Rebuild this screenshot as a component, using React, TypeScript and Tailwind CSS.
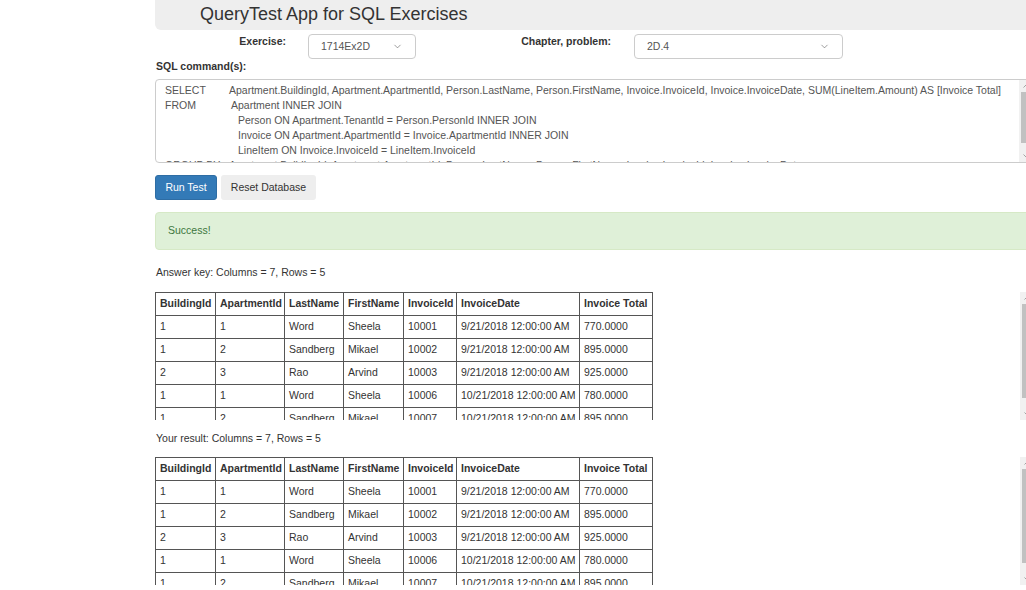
import React from "react";
import { ChevronDown } from "lucide-react";

type Row = {
  buildingId: number;
  apartmentId: number;
  lastName: string;
  firstName: string;
  invoiceId: number;
  invoiceDate: string;
  total: string;
};

const rows: Row[] = [
  { buildingId: 1, apartmentId: 1, lastName: "Word", firstName: "Sheela", invoiceId: 10001, invoiceDate: "9/21/2018 12:00:00 AM", total: "770.0000" },
  { buildingId: 1, apartmentId: 2, lastName: "Sandberg", firstName: "Mikael", invoiceId: 10002, invoiceDate: "9/21/2018 12:00:00 AM", total: "895.0000" },
  { buildingId: 2, apartmentId: 3, lastName: "Rao", firstName: "Arvind", invoiceId: 10003, invoiceDate: "9/21/2018 12:00:00 AM", total: "925.0000" },
  { buildingId: 1, apartmentId: 1, lastName: "Word", firstName: "Sheela", invoiceId: 10006, invoiceDate: "10/21/2018 12:00:00 AM", total: "780.0000" },
  { buildingId: 1, apartmentId: 2, lastName: "Sandberg", firstName: "Mikael", invoiceId: 10007, invoiceDate: "10/21/2018 12:00:00 AM", total: "895.0000" },
];

const columns = [
  { label: "BuildingId", width: "w-[60px]" },
  { label: "ApartmentId", width: "w-[69px]" },
  { label: "LastName", width: "w-[59px]" },
  { label: "FirstName", width: "w-[60px]" },
  { label: "InvoiceId", width: "w-[53px]" },
  { label: "InvoiceDate", width: "w-[123px]" },
  { label: "Invoice Total", width: "w-[73px]" },
];

function Select({ value, width }: { value: string; width: string }): JSX.Element {
  return (
    <div
      className={`${width} h-[25px] flex items-center justify-between pl-[12px] pr-[12px] bg-white border border-[#cccccc] rounded-[4px] text-[10.5px] text-[#555555]`}
    >
      <span>{value}</span>
      <ChevronDown size={11} strokeWidth={1.25} className="text-[#555555]" />
    </div>
  );
}

// classic scrollbar drawn by hand (headless browser hides the native one)
function Scrollbar({ thumb }: { thumb: string }): JSX.Element {
  return (
    <div className="w-[15px] shrink-0 h-full flex flex-col bg-[#f1f1f1]">
      <div className="h-[12px] flex items-center justify-center">
        <svg width="7" height="4" viewBox="0 0 7 4">
          <path d="M0.5 3.5 L3.5 0.5 L6.5 3.5" fill="none" stroke="#a3a3a3" strokeWidth="1" />
        </svg>
      </div>
      <div className="flex-1 flex flex-col px-[2px]">
        <div className={`${thumb} bg-[#c1c1c1]`} />
      </div>
      <div className="h-[12px] flex items-center justify-center">
        <svg width="7" height="4" viewBox="0 0 7 4">
          <path d="M0.5 0.5 L3.5 3.5 L6.5 0.5" fill="none" stroke="#a3a3a3" strokeWidth="1" />
        </svg>
      </div>
    </div>
  );
}

function ResultTable(): JSX.Element {
  return (
    <div className="h-[128px] flex">
      <div className="flex-1 overflow-hidden">
        <table className="table-fixed w-[497px] border-collapse text-[10.5px] text-[#333333]">
          <thead>
            <tr>
              {columns.map((col) => (
                <th
                  key={col.label}
                  className={`${col.width} border border-[#555555] px-[4px] h-[23px] text-left font-bold whitespace-nowrap`}
                >
                  {col.label}
                </th>
              ))}
            </tr>
          </thead>
          <tbody>
            {rows.map((row, i) => (
              <tr key={i}>
                <td className="border border-[#555555] px-[4px] h-[23px]">{row.buildingId}</td>
                <td className="border border-[#555555] px-[4px]">{row.apartmentId}</td>
                <td className="border border-[#555555] px-[4px]">{row.lastName}</td>
                <td className="border border-[#555555] px-[4px]">{row.firstName}</td>
                <td className="border border-[#555555] px-[4px]">{row.invoiceId}</td>
                <td className="border border-[#555555] px-[4px] whitespace-nowrap">{row.invoiceDate}</td>
                <td className="border border-[#555555] px-[4px]">{row.total}</td>
              </tr>
            ))}
          </tbody>
        </table>
      </div>
      <Scrollbar thumb="h-[94px]" />
    </div>
  );
}

export default function App(): JSX.Element {
  return (
    <div className="w-[1026px] h-[590px] overflow-hidden bg-white font-['Liberation_Sans',Arial,sans-serif] text-[#333333]">
      <div className="ml-[155px] w-[880px]">
        {/* title bar */}
        <div className="h-[30px] bg-[#eeeeee] rounded-bl-[6px] pl-[45px] pt-[3px] text-[18px] leading-[22px]">
          QueryTest App for SQL Exercises
        </div>

        {/* exercise pickers */}
        <div className="flex mt-[4px] text-[10.5px] leading-[15px]">
          <div className="w-[153px] pr-[22px] text-right font-bold">Exercise:</div>
          <Select value="1714Ex2D" width="w-[108px]" />
          <div className="w-[218px] pr-[23px] text-right font-bold">Chapter, problem:</div>
          <Select value="2D.4" width="w-[209px]" />
        </div>

        <div className="pl-[1px] text-[10.5px] leading-[15px] font-bold">SQL command(s):</div>

        {/* sql editor */}
        <div className="mt-[5px] h-[84px] flex border border-[#cccccc] rounded-[4px] overflow-hidden">
          <div className="flex-1 overflow-hidden pl-[9px] pt-[3px] text-[10.5px] leading-[15px] text-[#555555] whitespace-pre">
            <div className="flex">
              <span className="w-[64px] shrink-0">SELECT</span>
              <span>Apartment.BuildingId, Apartment.ApartmentId, Person.LastName, Person.FirstName, Invoice.InvoiceId, Invoice.InvoiceDate, SUM(LineItem.Amount) AS [Invoice Total]</span>
            </div>
            <div className="flex">
              <span className="w-[66px] shrink-0">FROM</span>
              <span>Apartment INNER JOIN</span>
            </div>
            <div className="pl-[73px]">Person ON Apartment.TenantId = Person.PersonId INNER JOIN</div>
            <div className="pl-[73px]">Invoice ON Apartment.ApartmentId = Invoice.ApartmentId INNER JOIN</div>
            <div className="pl-[73px]">LineItem ON Invoice.InvoiceId = LineItem.InvoiceId</div>
            <div className="flex">
              <span className="w-[64px] shrink-0">GROUP BY</span>
              <span>Apartment.BuildingId, Apartment.ApartmentId, Person.LastName, Person.FirstName, Invoice.InvoiceId, Invoice.InvoiceDate</span>
            </div>
          </div>
          <Scrollbar thumb="h-[51px]" />
        </div>

        {/* buttons */}
        <div className="flex gap-[4px] mt-[12px] text-[10.5px]">
          <button className="h-[25px] w-[62px] bg-[#337ab7] border border-[#2e6da4] rounded-[3px] text-white">
            Run Test
          </button>
          <button className="h-[25px] w-[95px] bg-[#eeeeee] rounded-[3px] text-[#333333]">
            Reset Database
          </button>
        </div>

        {/* status */}
        <div className="mt-[12px] h-[38px] flex items-center pl-[12px] bg-[#dff0d8] border border-[#d6e9c6] rounded-[4px] text-[10.5px] text-[#3c763d]">
          Success!
        </div>

        <div className="mt-[15px] pl-[1px] text-[10.5px] leading-[15px]">Answer key: Columns = 7, Rows = 5</div>
        <div className="mt-[12px]">
          <ResultTable />
        </div>

        <div className="mt-[11px] pl-[1px] text-[10.5px] leading-[15px]">Your result: Columns = 7, Rows = 5</div>
        <div className="mt-[11px]">
          <ResultTable />
        </div>
      </div>
    </div>
  );
}
